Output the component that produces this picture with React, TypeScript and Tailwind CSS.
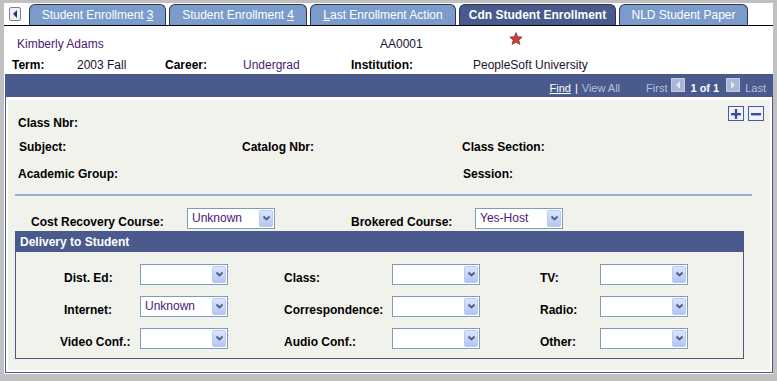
import React from "react";

const Chevron = () => (
  <svg width="9" height="7" viewBox="0 0 9 7">
    <polyline points="1.5,1.5 4.5,4.5 7.5,1.5" fill="none" stroke="#4d5d82" strokeWidth="1.8" />
  </svg>
);

function Select({ value = "" }: { value?: string }) {
  return (
    <div className="h-[21px] w-[88px] border border-[#7f9db9] bg-white flex items-stretch justify-between p-[1px]">
      <span className="pl-[3px] text-[12px] leading-[17px] text-[#4b1a73]">{value}</span>
      <span className="w-[14px] flex items-center justify-center rounded-[2px] border border-[#b9c9ef] bg-gradient-to-b from-[#dbe5fc] to-[#b3c6f2]">
        <Chevron />
      </span>
    </div>
  );
}

const Label = ({ children, className = "" }: { children: React.ReactNode; className?: string }) => (
  <span className={"text-[12px] font-bold leading-[14px] text-black whitespace-nowrap " + className}>{children}</span>
);

const FLabel = ({ children, className = "" }: { children: React.ReactNode; className?: string }) => (
  <span className={"h-[21px] pt-[8px] text-[12px] font-bold leading-[13px] text-black whitespace-nowrap " + className}>
    {children}
  </span>
);

function Tab({ children, w, active = false }: { children: React.ReactNode; w: string; active?: boolean }) {
  return (
    <div
      className={
        "h-[21px] flex items-center justify-center rounded-t-[6px] border border-b-0 border-[#2e3550] text-[12px] text-white whitespace-nowrap " +
        w +
        (active ? " bg-[#4a5a8c] font-bold" : " bg-[#7b9bcb]")
      }
    >
      {children}
    </div>
  );
}

const NavBtn = ({ dir }: { dir: "l" | "r" }) => (
  <span className="w-[14px] h-[14px] mb-[3px] bg-[#a9b6d6] border border-[#c3cce4] flex items-center justify-center">
    <svg width="6" height="8" viewBox="0 0 6 8">
      {dir === "l" ? <polygon points="5,0 1,4 5,8" fill="#e4e9f4" /> : <polygon points="1,0 5,4 1,8" fill="#e4e9f4" />}
    </svg>
  </span>
);

const PMBtn = ({ plus }: { plus?: boolean }) => (
  <span className="w-[16px] h-[15px] border border-[#4a5a9c] bg-[#eef2fb] flex items-center justify-center">
    <svg width="10" height="10" viewBox="0 0 10 10">
      <rect x="0" y="4" width="10" height="2.4" fill="#3d4f96" />
      {plus && <rect x="3.8" y="0" width="2.4" height="10" fill="#3d4f96" />}
    </svg>
  </span>
);

export default function App() {
  return (
    <div className="w-[777px] h-[381px] bg-[#c0c0c0] pt-[3px] px-[4px] pb-[7px] font-['Liberation_Sans',Arial,sans-serif]">
      <div className="bg-white h-full flex flex-col">
        {/* tab row */}
        <div className="h-[23px] pt-[1px] flex items-start border-b border-black">
          <div className="ml-[5px] mt-[3px] w-[12px] h-[14px] border border-[#77809c] rounded-[2px] bg-[#eef0f6] flex items-center justify-center">
            <svg width="6" height="8" viewBox="0 0 6 8">
              <polygon points="5,0 1,4 5,8" fill="#2a3566" />
            </svg>
          </div>
          <div className="ml-[8px] flex gap-[3px]">
            <Tab w="w-[137px]">
              Student Enrollment <span className="underline ml-[3px]">3</span>
            </Tab>
            <Tab w="w-[138px]">
              Student Enrollment <span className="underline ml-[3px]">4</span>
            </Tab>
            <Tab w="w-[146px]">
              <span className="underline">L</span>ast Enrollment Action
            </Tab>
            <Tab w="w-[157px]" active>
              Cdn Student Enrollment
            </Tab>
            <Tab w="w-[129px]">NLD Student Paper</Tab>
          </div>
        </div>

        {/* name row */}
        <div className="mt-[9px] h-[18px] pl-[13px] grid grid-cols-[363px_129px_auto] items-center text-[12px]">
          <span className="text-[#4b1a73]">Kimberly Adams</span>
          <span className="text-[#1b1030]">AA0001</span>
          <span className="self-start -mt-[3px]">
            <svg width="14" height="13" viewBox="0 0 24 23">
              <polygon
                points="12,1 15,8.5 23,9 17,14.5 19,22 12,18 5,22 7,14.5 1,9 9,8.5"
                fill="#d23a3a"
                stroke="#7a2a2a"
                strokeWidth="1.2"
              />
            </svg>
          </span>
        </div>

        {/* term row */}
        <div className="mt-[3px] h-[18px] pl-[8px] grid grid-cols-[65px_88px_78px_108px_122px_auto] items-center text-[12px]">
          <Label>Term:</Label>
          <span className="text-[#1b1030]">2003 Fall</span>
          <Label>Career:</Label>
          <span className="text-[#4b1a73]">Undergrad</span>
          <Label>Institution:</Label>
          <span className="text-[#1b1030]">PeopleSoft University</span>
        </div>

        {/* frame */}
        <div className="ml-[1px] h-[299px] border border-[#4a5a8c] flex flex-col">
          <div className="h-[22px] bg-[#4a5a8c] flex items-end justify-end pr-[6px] pb-[2px] text-[11px] leading-[14px]">
            <span className="text-white underline">Find</span>
            <span className="text-white mx-[4px]">|</span>
            <span className="text-[#b6c0dc]">View All</span>
            <span className="text-[#b6c0dc] ml-[26px]">First</span>
            <span className="ml-[4px]"><NavBtn dir="l" /></span>
            <span className="text-white font-bold ml-[5px]">1 of 1</span>
            <span className="ml-[7px]"><NavBtn dir="r" /></span>
            <span className="text-[#b6c0dc] ml-[5px]">Last</span>
          </div>

          <div className="mx-[2px] mt-[3px] mb-[2px] flex-1 bg-[#f1f2ec] flex flex-col">
            {/* row A */}
            <div className="pt-[6px] pr-[6px] flex items-start">
              <Label className="ml-[10px] mt-[10px]">Class Nbr:</Label>
              <div className="ml-auto flex gap-[4px]">
                <PMBtn plus />
                <PMBtn />
              </div>
            </div>
            {/* row B */}
            <div className="mt-[10px] pl-[11px] grid grid-cols-[223px_220px_auto]">
              <Label>Subject:</Label>
              <Label>Catalog Nbr:</Label>
              <Label>Class Section:</Label>
            </div>
            {/* row C */}
            <div className="mt-[13px] pl-[10px] grid grid-cols-[445px_auto]">
              <Label>Academic Group:</Label>
              <Label>Session:</Label>
            </div>
            {/* rule */}
            <div className="mt-[13px] ml-[7px] w-[737px] h-[2px] bg-[#9aaad2]" />
            {/* row D */}
            <div className="mt-[12px] grid grid-cols-[179px_88px_200px_88px]">
              <FLabel className="pl-[23px]">Cost Recovery Course:</FLabel>
              <Select value="Unknown" />
              <FLabel className="pl-[76px]">Brokered Course:</FLabel>
              <Select value="Yes-Host" />
            </div>
            {/* delivery box */}
            <div className="mt-[2px] ml-[7px] w-[729px] border border-[#4a5a8c] flex flex-col">
              <div className="h-[20px] bg-[#4a5a8c] flex items-center pl-[4px]">
                <span className="text-[12px] font-bold text-white">Delivery to Student</span>
              </div>
              <div className="pt-[12px] pb-[9px] grid grid-cols-[124px_88px_164px_88px_120px_88px] gap-y-[11px]">
                <FLabel className="pl-[48px]">Dist. Ed:</FLabel>
                <Select />
                <FLabel className="pl-[56px]">Class:</FLabel>
                <Select />
                <FLabel className="pl-[60px]">TV:</FLabel>
                <Select />

                <FLabel className="pl-[48px]">Internet:</FLabel>
                <Select value="Unknown" />
                <FLabel className="pl-[56px]">Correspondence:</FLabel>
                <Select />
                <FLabel className="pl-[60px]">Radio:</FLabel>
                <Select />

                <FLabel className="pl-[44px]">Video Conf.:</FLabel>
                <Select />
                <FLabel className="pl-[56px]">Audio Conf.:</FLabel>
                <Select />
                <FLabel className="pl-[60px]">Other:</FLabel>
                <Select />
              </div>
            </div>
          </div>
        </div>
      </div>
    </div>
  );
}
